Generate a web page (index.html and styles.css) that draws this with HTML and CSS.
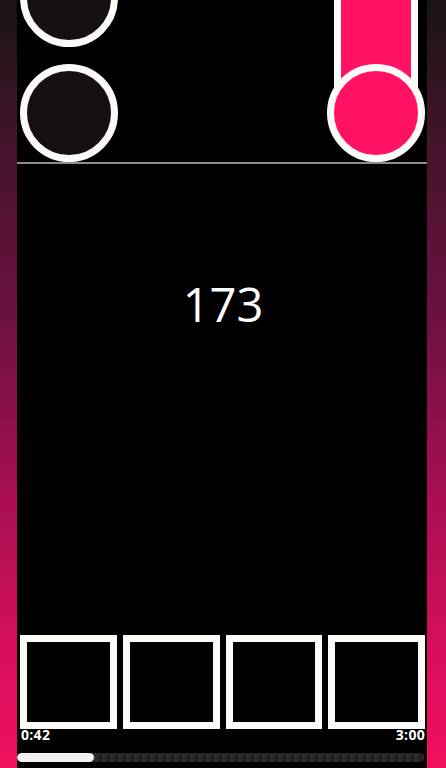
FILE: index.html
```html
<!DOCTYPE html>
<html>
<head>
<meta charset="utf-8">
<link rel="stylesheet" href="styles.css">
</head>
<body>
<div class="screen">
  <div class="side"></div>
  <main class="game">
    <section class="lanes">
      <div class="lane lane-left">
        <div class="note"></div>
        <div class="note"></div>
      </div>
      <div class="lane lane-right">
        <div class="hold"></div>
        <div class="note note-hit"></div>
      </div>
    </section>
    <div class="judge-line"></div>
    <section class="field">
      <div class="score">173</div>
    </section>
    <section class="pads">
      <div class="pad"></div>
      <div class="pad"></div>
      <div class="pad"></div>
      <div class="pad"></div>
    </section>
    <div class="times">
      <span>0:42</span>
      <span>3:00</span>
    </div>
    <div class="progress">
      <div class="progress-fill" style="width: 19%"></div>
    </div>
  </main>
  <div class="side side-right"></div>
</div>
</body>
</html>
```
FILE: styles.css
```css
* { box-sizing: border-box; }
html, body { margin: 0; padding: 0; background: #000; }
.screen {
  display: flex;
  width: 446px;
  height: 768px;
  overflow: hidden;
}
.side {
  width: 17px;
  flex: none;
  background: linear-gradient(#1a1316 0%, #3c1426 15%, #6a1140 40%, #a80f52 65%, #d80f5c 85%, #f2105f 100%);
}
.side-right { width: 19px; }
.game {
  width: 410px;
  flex: none;
  display: flex;
  flex-direction: column;
  background: #000;
}
.lanes {
  height: 162px;
  flex: none;
  overflow: hidden;
  display: flex;
  justify-content: space-between;
  padding: 0 2px 0 2px;
}
.lane {
  width: 99px;
  display: flex;
  flex-direction: column;
  justify-content: flex-end;
  align-items: center;
}
.lane-left { gap: 17px; }
.note {
  width: 98px;
  height: 98px;
  flex: none;
  border-radius: 50%;
  border: 7px solid #fbfaf6;
  background: #161011;
  position: relative;
  z-index: 1;
}
.note-hit { background: #ff1264; }
.hold {
  width: 84px;
  flex: 1;
  margin-bottom: -49px;
  border: 7px solid #fdfdfc;
  border-top: none;
  background: #ff1264;
}
.judge-line {
  height: 2px;
  flex: none;
  background: #8c8c8c;
}
.field {
  flex: 1;
  padding-top: 116px;
  display: flex;
  justify-content: center;
  align-items: flex-start;
}
.score {
  font-family: "Open Sans", sans-serif;
  font-size: 47px;
  line-height: 48px;
  color: #fff;
  letter-spacing: 0;
  margin-left: 2px;
}
.pads {
  height: 94px;
  flex: none;
  display: grid;
  grid-template-columns: repeat(4, 1fr);
  gap: 6px;
  padding: 0 2px 0 3px;
}
.pad {
  border: 7px solid #fbfaf6;
  background: #000;
}
.times {
  height: 14px;
  margin-top: -1px;
  flex: none;
  display: flex;
  justify-content: space-between;
  padding: 0 2px 0 4px;
  font-family: "Open Sans", sans-serif;
  font-weight: 700;
  font-size: 14px;
  line-height: 14px;
  letter-spacing: 0.3px;
  color: #fff;
}
.progress {
  height: 9px;
  margin: 11px 3px 6px 0;
  flex: none;
  border-radius: 5px;
  background: repeating-linear-gradient(90deg, #262626 0px, #262626 3px, #1c1c1c 3px, #1c1c1c 5px, #2c2c2c 5px, #2c2c2c 8px);
  overflow: hidden;
}
.progress-fill {
  height: 100%;
  border-radius: 5px;
  background: #f1f1f0;
}
```
